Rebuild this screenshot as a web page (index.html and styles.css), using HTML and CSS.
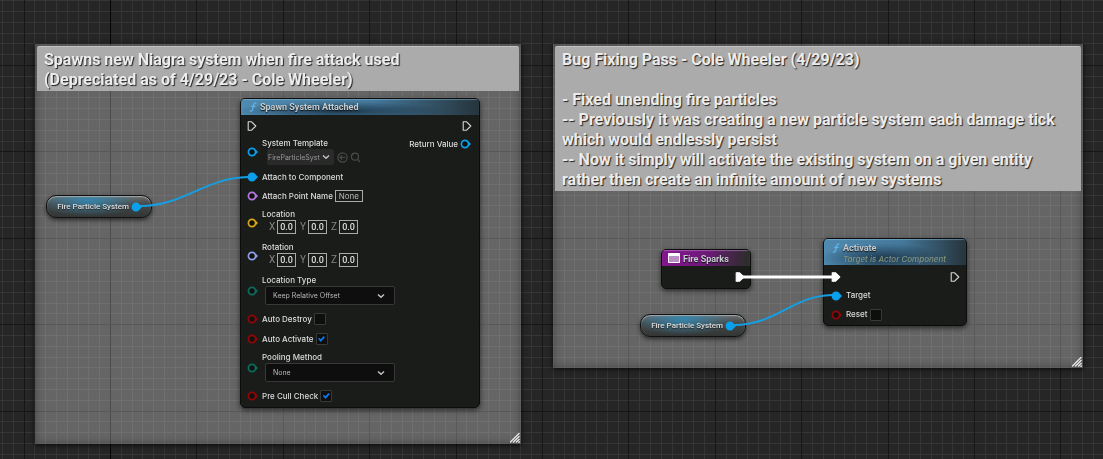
FILE: index.html
```html
<!DOCTYPE html>
<html lang="en">
<head>
<meta charset="utf-8">
<title>Blueprint Event Graph</title>
<link rel="stylesheet" href="styles.css">
</head>
<body>
<svg class="symbols" aria-hidden="true">
  <symbol id="exec" viewBox="0 0 10 10"><path d="M1.2 .8H4.6L8.8 5L4.6 9.2H1.2Z" stroke-width="1.1" stroke-linejoin="round"/></symbol>
  <symbol id="pin" viewBox="0 0 12 10"><circle cx="5" cy="5" r="3.6" stroke-width="1.7"/><path class="tip" d="M9 3L11 5L9 7Z"/></symbol>
  <symbol id="chevron" viewBox="0 0 8 6"><path d="M1 1.5L4 4.3L7 1.5" fill="none" stroke="currentColor" stroke-width="1.5"/></symbol>
  <symbol id="fn" viewBox="0 0 8 10"><path d="M7.3 1.4C6.2 .4 5 1 4.7 2.6L3.7 7.2C3.4 8.9 2.2 9.7 .7 8.8M2.2 4.3H6.4" fill="none" stroke="#62b5ec" stroke-width="1.2"/></symbol>
  <symbol id="grip" viewBox="0 0 10 10"><path d="M0 9.5L9.5 0M3 9.5L9.5 3M6 9.5L9.5 6M8.5 9.8L9.8 8.5" stroke="#e6e6e6" stroke-width="1.4"/></symbol>
</svg>
<main class="graph">
  <canvas class="grid"></canvas>

  <section class="comment comment-spawn">
    <h2>Spawns new Niagra system when fire attack used<br>(Depreciated as of 4/29/23 - Cole Wheeler)</h2>
    <svg class="grip"><use href="#grip"/></svg>
  </section>
  <section class="comment comment-fix">
    <h2>Bug Fixing Pass - Cole Wheeler (4/29/23)<br><br>- Fixed unending fire particles<br>-- Previously it was creating a new particle system each damage tick<br>which would endlessly persist<br>-- Now it simply will activate the existing system on a given entity<br>rather then create an infinite amount of new systems</h2>
    <svg class="grip"><use href="#grip"/></svg>
  </section>

  <article class="node node-spawn">
    <header><svg class="fn"><use href="#fn"/></svg><h3>Spawn System Attached</h3></header>
    <div class="body">
      <div class="inputs">
        <div class="row"><svg class="exec"><use href="#exec"/></svg></div>
        <div class="row">
          <svg class="pin object"><use href="#pin"/></svg>
          <div class="field">
            <label for="template">System Template</label>
            <div class="asset">
              <span class="select small"><select id="template"><option>FireParticleSyst</option></select><svg><use href="#chevron"/></svg></span>
              <button type="button" aria-label="Use selected asset"><svg viewBox="0 0 11 11"><circle cx="5.5" cy="5.5" r="4.6"/><path d="M8.5 5.5H3M5.2 3.3L3 5.5L5.2 7.7"/></svg></button>
              <button type="button" aria-label="Browse to asset"><svg viewBox="0 0 11 11"><circle cx="5" cy="4.7" r="3.5"/><path d="M7.5 7.2L10 10"/></svg></button>
            </div>
          </div>
        </div>
        <div class="row"><svg class="pin object linked"><use href="#pin"/></svg><span>Attach to Component</span></div>
        <div class="row tall"><svg class="pin name"><use href="#pin"/></svg><label for="point">Attach Point Name</label><input class="text" id="point" value="None"></div>
        <div class="row">
          <svg class="pin vector"><use href="#pin"/></svg>
          <div class="field"><span>Location</span>
            <div class="axes"><label for="lx">X</label><input class="text" id="lx" value="0.0"><label for="ly">Y</label><input class="text" id="ly" value="0.0"><label for="lz">Z</label><input class="text" id="lz" value="0.0"></div>
          </div>
        </div>
        <div class="row">
          <svg class="pin rotator"><use href="#pin"/></svg>
          <div class="field"><span>Rotation</span>
            <div class="axes"><label for="rx">X</label><input class="text" id="rx" value="0.0"><label for="ry">Y</label><input class="text" id="ry" value="0.0"><label for="rz">Z</label><input class="text" id="rz" value="0.0"></div>
          </div>
        </div>
        <div class="row">
          <svg class="pin enum"><use href="#pin"/></svg>
          <div class="field"><label for="loctype">Location Type</label>
            <span class="select"><select id="loctype"><option>Keep Relative Offset</option></select><svg><use href="#chevron"/></svg></span>
          </div>
        </div>
        <div class="row tall"><svg class="pin bool"><use href="#pin"/></svg><label for="destroy">Auto Destroy</label><input type="checkbox" id="destroy"></div>
        <div class="row tall"><svg class="pin bool"><use href="#pin"/></svg><label for="activate">Auto Activate</label><input type="checkbox" id="activate" checked></div>
        <div class="row">
          <svg class="pin enum"><use href="#pin"/></svg>
          <div class="field"><label for="pooling">Pooling Method</label>
            <span class="select"><select id="pooling"><option>None</option></select><svg><use href="#chevron"/></svg></span>
          </div>
        </div>
        <div class="row tall"><svg class="pin bool"><use href="#pin"/></svg><label for="cull">Pre Cull Check</label><input type="checkbox" id="cull" checked></div>
      </div>
      <div class="outputs">
        <div class="row"><svg class="exec"><use href="#exec"/></svg></div>
        <div class="row"><span>Return Value</span><svg class="pin object"><use href="#pin"/></svg></div>
      </div>
    </div>
  </article>

  <article class="variable variable-a"><span>Fire Particle System</span><svg class="pin object linked"><use href="#pin"/></svg></article>

  <article class="node node-event">
    <header><svg class="event" viewBox="0 0 12 10"><path d="M.5 .5H11.5V9.5H.5Z" fill="#b98fc4" stroke="#fff"/><path d="M.5 .5H11.5V3H.5Z" fill="#fff"/></svg><h3>Fire Sparks</h3></header>
    <div class="body">
      <div class="outputs"><div class="row"><svg class="exec linked"><use href="#exec"/></svg></div></div>
    </div>
  </article>

  <article class="node node-activate">
    <header><svg class="fn"><use href="#fn"/></svg><div><h3>Activate</h3><p>Target is Actor Component</p></div></header>
    <div class="body">
      <div class="inputs">
        <div class="row"><svg class="exec linked"><use href="#exec"/></svg></div>
        <div class="row"><svg class="pin object linked"><use href="#pin"/></svg><span>Target</span></div>
        <div class="row"><svg class="pin bool"><use href="#pin"/></svg><label for="reset">Reset</label><input type="checkbox" id="reset"></div>
      </div>
      <div class="outputs"><div class="row"><svg class="exec"><use href="#exec"/></svg></div></div>
    </div>
  </article>

  <article class="variable variable-b"><span>Fire Particle System</span><svg class="pin object linked"><use href="#pin"/></svg></article>

  <svg class="wires" aria-hidden="true">
    <path class="data" d="M140 206C184 206 204 178 248 177"/>
    <path class="data" d="M734 325C776 325 792 296 832 295"/>
    <path class="flow" d="M742 277H834"/>
  </svg>
</main>
<script src="grid.js"></script>
</body>
</html>
```
FILE: styles.css
```css
* { box-sizing: border-box; }

body {
  margin: 0;
  background: #262626;
  color: #dcdcdc;
  font: 500 8px/11px Inter, Roboto, sans-serif;
}

h2, h3, p { margin: 0; }

.symbols { position: absolute; width: 0; height: 0; }

.graph { position: relative; height: 100vh; overflow: hidden; }
.grid { position: absolute; inset: 0; }
.wires { position: absolute; inset: 0; width: 100%; height: 100%; fill: none; pointer-events: none; }
.wires .data { stroke: #159fe2; stroke-width: 2; }
.wires .flow { stroke: #fff; stroke-width: 3; }

/* Comment boxes */
.comment {
  position: absolute;
  padding: 2px;
  background: rgba(255, 255, 255, .29);
  box-shadow: 0 1px 5px rgba(0, 0, 0, .8), inset 0 0 8px rgba(0, 0, 0, .35);
}
.comment-spawn { left: 35px; top: 44px; width: 486px; height: 400px; }
.comment-fix { left: 553px; top: 44px; width: 530px; height: 324px; }
.comment h2 {
  padding: 3px 7px 1px;
  background: #ababab;
  border-top: 1px solid #c0c0c0;
  border-radius: 2px 2px 0 0;
  color: #ececec;
  font: 700 16px/20px Roboto, sans-serif;
  text-shadow: 1px 1px 1px #222;
  white-space: nowrap;
}
.comment .grip { position: absolute; right: 1px; bottom: 1px; width: 10px; height: 10px; }

/* Nodes */
.node {
  position: absolute;
  border: 1px solid #0b0c0b;
  border-radius: 5px;
  background: rgba(24, 26, 24, .97);
  box-shadow: 0 2px 5px rgba(0, 0, 0, .6);
  overflow: hidden;
}
.node-spawn { left: 240px; top: 98px; width: 240px; }
.node-event { left: 661px; top: 249px; width: 90px; height: 40px; }
.node-activate { left: 823px; top: 238px; width: 144px; height: 88px; }

.node header {
  display: flex;
  gap: 3px;
  padding: 1px 8px 0;
  height: 16px;
  background: radial-gradient(ellipse at 42% 75%, rgba(22, 44, 62, .85), transparent 55%), linear-gradient(90deg, #4f8ab0, #44789a 55%, #26343c);
  box-shadow: inset 0 1px 1px rgba(150, 200, 230, .45);
}
.node h3 { color: #c4ccd0; font: 700 9px/14px Roboto, sans-serif; text-shadow: 0 1px 1px #111; }
.node header p { color: #83927c; font-style: italic; line-height: 9px; white-space: nowrap; }
.fn { width: 8px; height: 10px; margin-top: 2px; flex: none; }
.node-event header {
  padding: 2px 6px 0;
  background: linear-gradient(100deg, #85158f, #6d1a78 50%, #2d2d2d 95%);
  box-shadow: inset 0 1px 1px rgba(220, 160, 230, .45);
}
.event { width: 12px; height: 10px; margin-top: 1px; flex: none; }
.node-activate header { height: 26px; padding: 2px 8px 0; }

.body { display: flex; justify-content: space-between; padding: 5px 6px 4px; }
.inputs, .outputs { display: flex; flex-direction: column; gap: 6px; }
.outputs { align-items: flex-end; margin-left: auto; }
.node-spawn .body { padding-right: 7px; }
.node-activate .body { padding-left: 7px; }
.node-event .body { padding-right: 5px; }
.row { display: flex; align-items: center; gap: 2px; min-height: 12px; white-space: nowrap; }
.row.tall { min-height: 14px; }
.node-activate .row { min-height: 13px; }

.exec { width: 10px; height: 10px; fill: none; stroke: #d8d8d8; }
.exec.linked { fill: #fff; stroke: #fff; }
.inputs .pin { margin-right: 1px; }
.pin { width: 12px; height: 10px; flex: none; fill: #101210; stroke: currentColor; }
.pin.linked { fill: currentColor; }
.tip { fill: currentColor; stroke: none; }
.object { color: #0aa0ea; }
.name { color: #b678e0; }
.vector { color: #d9a514; }
.rotator { color: #8e9fe6; }
.enum { color: #0b6c5c; }
.bool { color: #900606; }

.field { display: flex; flex-direction: column; }
.axes { display: flex; align-items: center; margin-left: 7px; padding-bottom: 2px; color: #858585; font: 400 10px/14px Roboto, sans-serif; }
.axes label { width: 8px; }
.axes input.text { width: 19px; margin-right: 4px; font: 500 9px/12px Roboto, sans-serif; }
input.text {
  width: 28px;
  height: 14px;
  padding: 0;
  border: 1px solid #a9a9a9;
  background: transparent;
  color: #dedede;
  font: 400 8px/10px Inter, sans-serif;
  text-align: center;
}
#point { height: 12px; color: #b8b8b8; }

.select { display: grid; align-items: center; width: 130px; margin: 0 0 1px 3px; }
.select select, .select svg { grid-area: 1 / 1; }
.select select {
  width: 100%;
  height: 19px;
  padding: 0 7px;
  appearance: none;
  border: 1px solid #383838;
  border-radius: 2px;
  background: #0e0e0e;
  color: #b8b8b8;
  font: 400 7px/11px Inter, sans-serif;
}
.select svg { justify-self: end; width: 8px; height: 6px; margin-right: 10px; color: #c0c0c0; pointer-events: none; }
.asset { display: flex; align-items: center; gap: 2px; margin-left: 2px; }
.select.small { width: 67px; margin: 0 1px 0 3px; }
.select.small select { height: 16px; padding: 0 0 0 1px; border: 0; background: #292a29; color: #999; }
.select.small svg { margin-right: 4px; }
.asset button { display: flex; padding: 0; border: 0; background: none; }
.asset button svg { width: 11px; height: 11px; fill: none; stroke: #494b49; stroke-width: 1.2; }

input[type="checkbox"] {
  width: 12px;
  height: 12px;
  margin: 0;
  appearance: none;
  border: 1px solid #383a38;
  border-radius: 1px;
  background: #0e0e0e;
  display: grid;
  place-items: center;
}
input[type="checkbox"]:checked::before {
  content: "";
  width: 7px;
  height: 6px;
  background: #0b78e8;
  clip-path: polygon(0 45%, 18% 28%, 38% 55%, 82% 0, 100% 20%, 40% 100%);
}

/* Variable getters */
.variable {
  position: absolute;
  display: flex;
  align-items: center;
  justify-content: flex-end;
  gap: 2px;
  width: 106px;
  height: 23px;
  padding-right: 8px;
  border: 1px solid #111;
  border-radius: 10px;
  background: radial-gradient(ellipse 50px 16px at 40% 20%, rgba(48, 140, 185, .85), transparent), linear-gradient(#6c6e6e, #454848 40%, #333535);
  box-shadow: 0 2px 4px rgba(0, 0, 0, .6), inset 0 1px 1px #a2a8aa;
  white-space: nowrap;
}
.variable span { font-family: Roboto, sans-serif; text-shadow: 0 1px 1px #222; }
.variable-a { left: 46px; top: 195px; }
.variable-b { left: 640px; top: 314px; }
```
FILE: grid.js
```js
const canvas = document.querySelector(".grid");

// Eight small cells make one large cell.
const CELL = 10.8, ORIGIN_X = 110, ORIGIN_Y = 65;

function lines(size, origin, draw) {
  const first = Math.ceil(-origin / CELL);
  const last = Math.floor((size - origin) / CELL);
  for (let i = first; i <= last; i++) {
    draw(Math.round(origin + i * CELL), i % 8 === 0, i);
  }
}

function paint() {
  const w = canvas.width = innerWidth;
  const h = canvas.height = innerHeight;
  const ctx = canvas.getContext("2d");
  for (const pass of [false, true]) {
    lines(w, ORIGIN_X, (x, major, i) => {
      if (major !== pass) return;
      ctx.fillStyle = i === 0 ? "#050505" : major ? "#161616" : "#353535";
      ctx.fillRect(x, 0, 1, h);
    });
    lines(h, ORIGIN_Y, (y, major) => {
      if (major !== pass) return;
      ctx.fillStyle = major ? "#161616" : "#353535";
      ctx.fillRect(0, y, w, 1);
    });
  }
}

addEventListener("resize", paint);
paint();
```
